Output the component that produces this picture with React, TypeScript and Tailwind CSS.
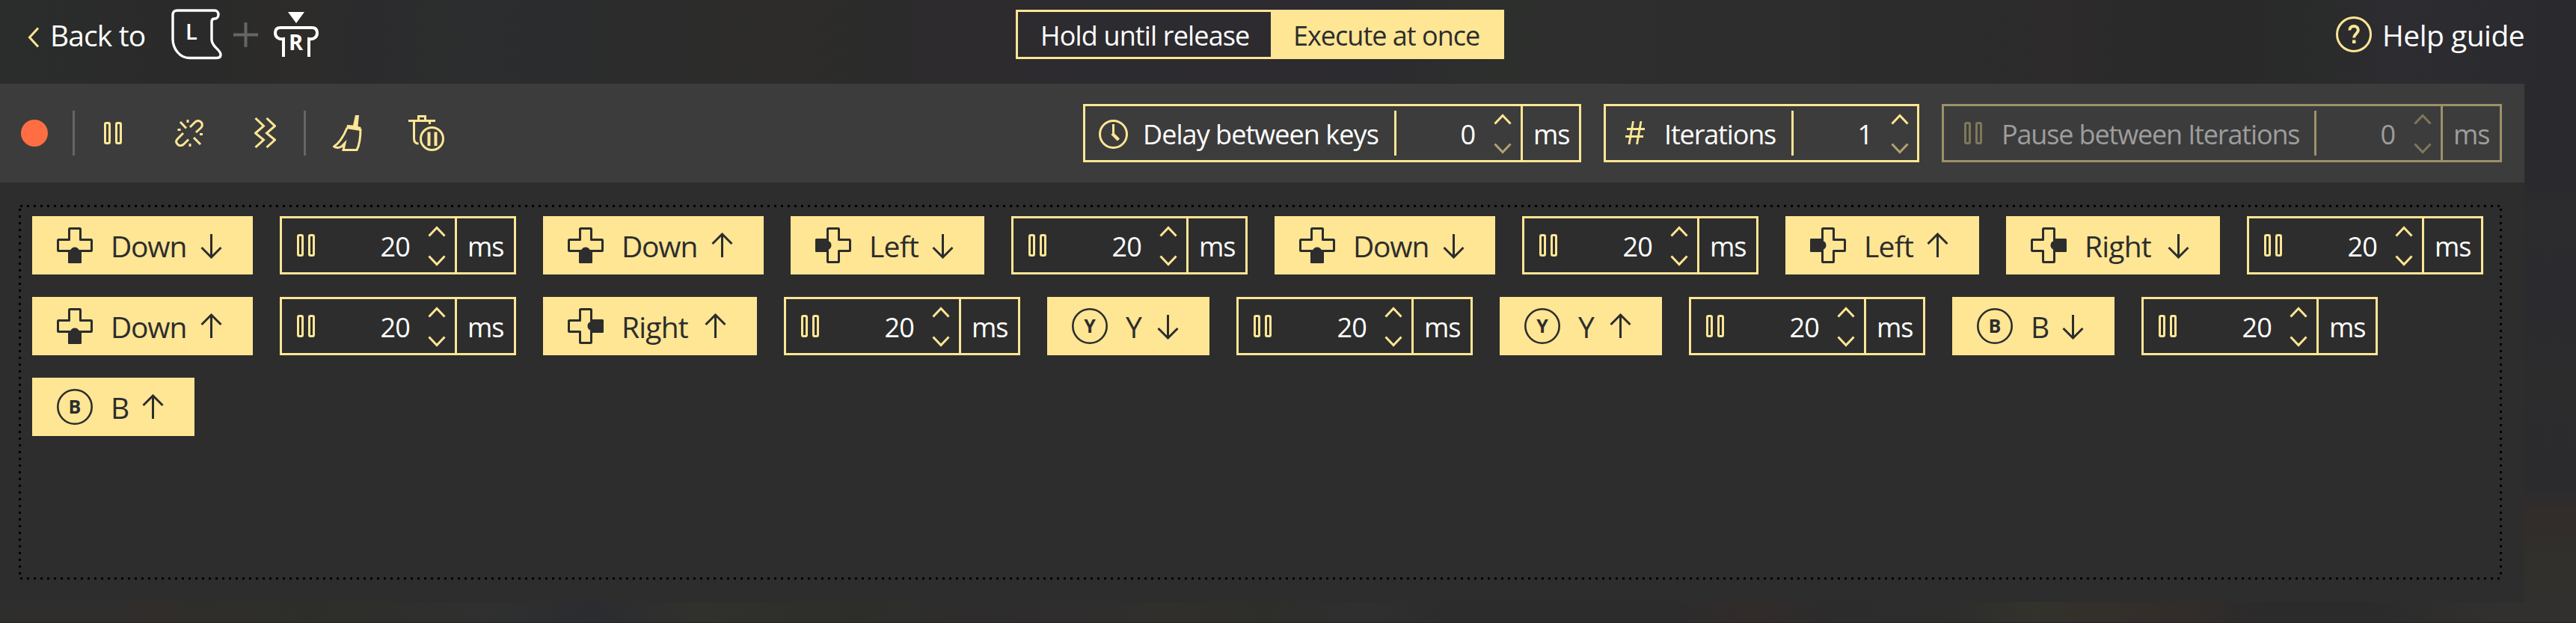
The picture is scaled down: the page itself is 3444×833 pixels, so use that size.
import { ReactNode } from 'react'

type Direction = 'up' | 'down'
type PadKey = 'Down' | 'Left' | 'Right' | 'Y' | 'B'

type Step =
  | { kind: 'key'; name: PadKey; direction: Direction }
  | { kind: 'wait'; ms: number }

const key = (name: PadKey, direction: Direction): Step => ({ kind: 'key', name, direction })
const wait = (ms: number): Step => ({ kind: 'wait', ms })

const steps: Step[] = [
  key('Down', 'down'),
  wait(20),
  key('Down', 'up'),
  key('Left', 'down'),
  wait(20),
  key('Down', 'down'),
  wait(20),
  key('Left', 'up'),
  key('Right', 'down'),
  wait(20),
  key('Down', 'up'),
  wait(20),
  key('Right', 'up'),
  wait(20),
  key('Y', 'down'),
  wait(20),
  key('Y', 'up'),
  wait(20),
  key('B', 'down'),
  wait(20),
  key('B', 'up'),
]

const keyWidths: Record<PadKey, string> = {
  Down: 'w-[295px]',
  Left: 'w-[259px]',
  Right: 'w-[286px]',
  Y: 'w-[217px]',
  B: 'w-[217px]',
}

const keyTracking: Record<PadKey, string> = {
  Down: 'tracking-[-1.2px]',
  Left: 'tracking-[-0.8px]',
  Right: 'tracking-[-0.8px]',
  Y: '',
  B: '',
}

export default function App() {
  return (
    <div className="h-[833px] w-[3444px] overflow-hidden bg-[#2c2c2d] font-['Open_Sans','Noto_Sans',sans-serif] text-white">
      <div className="flex h-full flex-col">
        <TopBar />
        <div className="flex shrink-0">
          <div className="w-[3375px] shrink-0">
            <Toolbar />
            <Timeline />
          </div>
          {/* Dimmed artwork showing beside the panel */}
          <div className="flex-1 bg-[linear-gradient(to_bottom,#2a292e_0%,#2a292e_18%,#2c2c2e_25%,#2b2a2f_40%,#2c2c2d_58%,#2b2b2e_78%,#322c2a_82%,#322c2a_86%,#302f2b_90%,#31302e_100%)]" />
        </div>
        <div className="h-7 border-b border-[#292329] bg-[linear-gradient(to_right,#2e2e2c_0%,#302d2b_6%,#2d2e29_12%,#2f302e_18%,#2b2c30_23%,#30302c_27%,#2d2e2a_33%,#2e2c2d_40%,#312f2c_45%,#2d2d29_49%,#2f2f30_53%,#2c2c2c_56%,#2c2c2c_65%,#322b2a_68%,#2c2c2c_71%,#2d2d2c_76%,#33322b_79%,#332d2a_84%,#2b2b2b_88%,#2b2b2b_92%,#31302e_97%,#32302e_100%)]" />
      </div>
    </div>
  )
}

function TopBar() {
  return (
    <header className="flex h-[112px] shrink-0 bg-[linear-gradient(to_right,#2b2d2c_0%,#2a2a2a_7%,#2d2c2a_12%,#2b2b2e_14%,#2c2d2d_17%,#2b2c2e_21%,#2c2c2c_25%,#2d2c2a_31%,#2b2b2b_34%,#2e2b2e_37%,#2c2b2f_43%,#2d2b30_50%,#2c2b2f_54%,#2d2f2d_58%,#2d2d2d_65%,#2c2c2c_75%,#2d2b2b_80%,#292929_86%,#2a2b2b_90%,#2d2c31_93%,#2a292e_100%)]">
      <div className="flex w-[1358px] items-start">
        <svg className="mt-9 ml-[37px] h-7 w-4" viewBox="0 0 16 28" fill="none" stroke="#ffe694" strokeWidth="3">
          <path d="M14 1.5 2.5 14 14 26.5" />
        </svg>
        <span className="mt-5 ml-[14px] w-[129px] text-[39px] leading-[54px] tracking-[-0.9px] whitespace-nowrap">Back to</span>
        <LeftTrigger />
        <svg className="mt-[30px] ml-[15px] h-[33px] w-[33px]" viewBox="0 0 33 33" stroke="#666" strokeWidth="4">
          <path d="M16.5 0v33M0 16.5h33" />
        </svg>
        <RightStick />
      </div>

      <div className="mt-[13px] flex h-[66px] w-[653px] border-[3px] border-[#ffe694] text-[36px] whitespace-nowrap">
        <div className="w-[338px] pl-[30px] leading-[64px] tracking-[-0.85px]">Hold until release</div>
        <div className="h-[60px] flex-1 bg-[#ffe694] pl-[30px] leading-[64px] tracking-[-1px] text-[#2d2d2d]">Execute at once</div>
      </div>

      <div className="ml-[1112px] flex items-start">
        <svg className="mt-[22px] h-12 w-12" viewBox="0 0 48 48" fill="none" stroke="#ffe694">
          <circle cx="24" cy="24" r="22.5" strokeWidth="3" />
          <path d="M18.3 18.4c0-3.3 2.3-5.4 5.7-5.4s5.8 2.1 5.8 5.3c0 4.8-5.6 4.9-5.6 10.2" strokeWidth="4" />
          <path d="M24.2 31.5v4.5" strokeWidth="4.5" />
        </svg>
        <span className="mt-5 ml-[14px] text-[39px] leading-[54px] tracking-[-0.5px] whitespace-nowrap">Help guide</span>
      </div>
    </header>
  )
}

function LeftTrigger() {
  return (
    <svg className="mt-3 ml-[33px] h-[68px] w-[68px] shrink-0" viewBox="0 0 68 68" fill="none" stroke="#fff" strokeWidth="3.4">
      <path d="M8 2h50c3 0 5 2.500 5 5.500s-2 5.500-5 5.500c-2.500 0-4 1-4 4v24c0 10 12 13 12 20 0 3-2 4.500-5 4.500H24C12 65.500 2 54 2 40V8c0-4 2-6 6-6Z" />
      <text x="19" y="41" fill="#fff" stroke="none" fontSize="29" fontWeight="600">
        L
      </text>
    </svg>
  )
}

function RightStick() {
  return (
    <svg className="mt-4 ml-[21px] h-[60px] w-[60px] shrink-0" viewBox="0 0 60 60" fill="none" stroke="#fff" strokeWidth="4">
      <path d="M19 0h22L30 15Z" fill="#fff" stroke="none" />
      <path d="M13 60V36c-6 1-11-2-11-8 0-5 3-7 7-7h42c4 0 7 2 7 7 0 6-5 9-11 8v24" />
      <text x="20" y="51" fill="#fff" stroke="none" fontSize="29" fontWeight="700">
        R
      </text>
    </svg>
  )
}

function Toolbar() {
  return (
    <div className="flex h-[132px] bg-[#3c3c3c]">
      <div className="flex w-[1448px] items-start">
        <div className="mt-12 ml-7 size-9 rounded-full bg-[#ff6e42]" />
        <div className="mt-9 ml-[33px] h-[60px] w-[3px] bg-[#666]" />
        <PauseIcon className="mt-[51px] ml-[39px]" />
        <BrokenLinkIcon />
        <ZigzagIcon />
        <div className="mt-9 ml-[37px] h-[60px] w-[3px] bg-[#666]" />
        <BroomIcon />
        <ClearPausesIcon />
      </div>

      <div className="mt-[27px] flex gap-[30px]">
        <SettingBox
          icon={<ClockIcon />}
          label="Delay between keys"
          value={0}
          unit="ms"
          boxClass="w-[666px] pl-[18px]"
          labelClass="ml-5 w-[336px] tracking-[-0.95px]"
        />
        <SettingBox
          icon={<HashIcon />}
          label="Iterations"
          value={1}
          boxClass="w-[422px] pl-[26px]"
          labelClass="ml-[26px] w-[170px] tracking-[-1.15px]"
        />
        <SettingBox
          icon={<PauseIcon className="mt-[21px]" />}
          label="Pause between Iterations"
          value={0}
          unit="ms"
          disabled
          boxClass="w-[749px] pl-[27px]"
          labelClass="ml-[26px] w-[418px] tracking-[-1.15px]"
        />
      </div>
    </div>
  )
}

interface SettingBoxProps {
  icon: ReactNode
  label: string
  value: number
  unit?: string
  disabled?: boolean
  boxClass: string
  labelClass: string
}

function SettingBox({ icon, label, value, unit, disabled = false, boxClass, labelClass }: SettingBoxProps) {
  const border = disabled ? 'border-[#9d9168]' : 'border-[#ffe694]'
  const rule = disabled ? 'bg-[#9d9168]' : 'bg-[#ffe694]'
  const text = disabled ? 'text-[#9d9d9d]' : 'text-white'

  return (
    <div className={`flex h-[78px] items-start border-[3px] text-[36px] leading-[76px] whitespace-nowrap ${border} ${text} ${boxClass}`}>
      <div className={disabled ? 'opacity-35' : ''}>{icon}</div>
      <span className={labelClass}>{label}</span>
      <div className={`mt-[6px] h-[60px] w-[3px] ${rule}`} />
      <span className="w-[106px] text-right">{value}</span>
      <Spinner upDim={disabled} downDim={disabled ? 'opacity-35' : 'opacity-60'} />
      {unit && <span className={`ml-3 h-[72px] flex-1 border-l-[3px] pl-[14px] tracking-[-1px] ${border}`}>{unit}</span>}
    </div>
  )
}

function Spinner({ upDim = false, downDim = '' }: { upDim?: boolean; downDim?: string }) {
  return (
    <svg className="mt-[10px] ml-6 h-[54px] w-6 shrink-0" viewBox="0 0 24 54" fill="none" stroke="#ffe694" strokeWidth="3">
      <path className={upDim ? 'opacity-35' : ''} d="M1.500 13.500 12 2.500l10.500 11" />
      <path className={downDim} d="M1.500 40.500 12 51.500l10.500-11" />
    </svg>
  )
}

function Timeline() {
  return (
    <div className="flex h-[561px] flex-col bg-[#2d2d2d] pt-[30px] pr-[30px] pb-[30px] pl-[25px]">
      <div className="ml-[2px] h-[3px] bg-[repeating-linear-gradient(to_right,#000_0_3px,transparent_3px_9px)]" />
      <div className="flex flex-1">
        <div className="w-[3px] bg-[repeating-linear-gradient(to_bottom,transparent_0_2px,#000_2px_5px,transparent_5px_9px)]" />
        <div className="flex flex-1 flex-wrap content-start gap-x-9 gap-y-[30px] pt-3 pl-[15px]">
          {steps.map((step, idx) =>
            step.kind === 'key' ? (
              <KeyStep key={idx} name={step.name} direction={step.direction} />
            ) : (
              <WaitStep key={idx} ms={step.ms} />
            )
          )}
        </div>
        <div className="w-[3px] bg-[repeating-linear-gradient(to_bottom,transparent_0_2px,#000_2px_5px,transparent_5px_9px)]" />
      </div>
      <div className="ml-[2px] h-[3px] bg-[repeating-linear-gradient(to_right,#000_0_3px,transparent_3px_9px)]" />
    </div>
  )
}

function KeyStep({ name, direction }: { name: PadKey; direction: Direction }) {
  return (
    <div className={`flex h-[78px] items-start bg-[#ffe694] pr-[41px] pl-[33px] text-[#2d2d2d] ${keyWidths[name]}`}>
      <div className="mt-[15px] size-12 shrink-0">{name === 'Y' || name === 'B' ? <FaceButton letter={name} /> : <DPad name={name} />}</div>
      <span className={`ml-6 text-[39px] leading-[80px] whitespace-nowrap ${keyTracking[name]}`}>{name}</span>
      <svg
        className={`ml-auto h-[33px] w-[29px] shrink-0 ${direction === 'up' ? 'mt-[22px]' : 'mt-6'}`}
        viewBox="0 0 29 33"
        fill="none"
        stroke="currentColor"
        strokeWidth="3"
      >
        <path d={direction === 'up' ? 'M14.500 33V2M1.500 15 14.500 2l13 13' : 'M14.500 0v31M1.500 18l13 13 13-13'} />
      </svg>
    </div>
  )
}

function WaitStep({ ms }: { ms: number }) {
  return (
    <div className="flex h-[78px] w-[316px] items-start border-[3px] border-[#ffe694] text-[36px] leading-[76px]">
      <PauseIcon className="mt-[21px] ml-5" />
      <span className="w-[127px] text-right tracking-[-0.8px]">{ms}</span>
      <Spinner />
      <span className="ml-3 h-[72px] flex-1 border-l-[3px] border-[#ffe694] pl-[14px] tracking-[-1px]">ms</span>
    </div>
  )
}

function DPad({ name }: { name: PadKey }) {
  const turn = name === 'Left' ? 'rotate-90' : name === 'Right' ? '-rotate-90' : ''
  return (
    <svg className={`size-12 ${turn}`} viewBox="0 0 48 48" fill="none" stroke="currentColor" strokeWidth="3" strokeLinejoin="round">
      <path d="M17.500 1.500h13q1 0 1 1v14h14q1 0 1 1v13q0 1-1 1h-14v14q0 1-1 1h-13q-1 0-1-1v-14h-14q-1 0-1-1v-13q0-1 1-1h14v-14q0-1 1-1Z" />
      <path d="M16.500 31.500 19 32c1-2.500 2-4 5-4s4 1.500 5 4l2.500-.5v15h-15Z" fill="currentColor" />
    </svg>
  )
}

function FaceButton({ letter }: { letter: string }) {
  return (
    <svg className="size-12" viewBox="0 0 48 48">
      <circle cx="24" cy="24" r="22.700" fill="none" stroke="currentColor" strokeWidth="2.600" />
      <text x="24" y="33" fill="currentColor" fontSize="25" fontWeight="700" textAnchor="middle">
        {letter}
      </text>
    </svg>
  )
}

function PauseIcon({ className = '' }: { className?: string }) {
  return (
    <svg className={`h-[30px] w-6 shrink-0 ${className}`} viewBox="0 0 24 30" fill="none" stroke="#ffe694" strokeWidth="3">
      <rect x="1.500" y="1.500" width="6" height="27" rx="1.500" />
      <rect x="16.500" y="1.500" width="6" height="27" rx="1.500" />
    </svg>
  )
}

function BrokenLinkIcon() {
  return (
    <svg className="mt-12 ml-[71px] h-9 w-[38px]" viewBox="0 0 38 36" fill="none" stroke="#ffe694" strokeWidth="3">
      <path d="m20 10 6-6c3-3 6-3 8.500-1s2.500 5.500 0 8L28 17" />
      <path d="m11 18-7.500 7.500c-2.500 2.500-2.500 5 0 7.500s5.500 2 8 0l6.500-6.500" />
      <path d="m7 3 8 8.500M25 24l9 9M17 0v4M20 32v4M3.500 13.500h4M33 19.500h4" />
    </svg>
  )
}

function ZigzagIcon() {
  return (
    <svg className="mt-[45px] ml-[68px] h-[41px] w-[29px]" viewBox="0 0 29 41" fill="none" stroke="#ffe694" strokeWidth="3">
      <path d="m1.500 1 11 10.500-11 9.500 11 9-11 10M16.500 1l11 10.500-11 9.500 11 9-11 10" />
    </svg>
  )
}

function BroomIcon() {
  return (
    <svg className="mt-[42px] ml-9 h-12 w-[39px]" viewBox="0 0 39 48" fill="none" stroke="#ffe694" strokeWidth="3">
      <path d="M30 0h5l-1.500 15 4 1-.5 5-19-3 1-5 8 .5Z" fill="#ffe694" stroke="none" />
      <path d="M19 17C14.500 28 9 37 1.500 42c5 3 10 1 13-3l1.500-1.500-2 9h18C36.500 38 37 27 37 18" />
    </svg>
  )
}

function ClearPausesIcon() {
  return (
    <svg className="mt-[42px] ml-[62px] h-12 w-12" viewBox="0 0 48 48" fill="none" stroke="#ffe694" strokeWidth="3">
      <path d="M0 7.500h36M13.500 7V1.500h9V7M7.500 7v24c0 5 2 7 6 7M28.500 8v4" />
      <circle cx="31.500" cy="31.500" r="15" />
      <path d="M27.500 22.500V41M36.500 22.500V41" strokeWidth="4" />
    </svg>
  )
}

function ClockIcon() {
  return (
    <svg className="mt-[18px] h-[39px] w-[39px]" viewBox="0 0 39 39" fill="none" stroke="#ffe694" strokeWidth="3">
      <circle cx="19.500" cy="19.500" r="18" />
      <path d="M19.500 6v13" />
      <path d="m18 18.500 8.500 8.500" strokeWidth="4.500" />
    </svg>
  )
}

function HashIcon() {
  return (
    <svg className="mt-5 h-[31px] w-[26px]" viewBox="0 0 26 31" fill="none" stroke="#ffe694" strokeWidth="2.800">
      <path d="M10.500 0 5 31M21 0l-5.500 31M2 10.500h24M0 20.500h24" />
    </svg>
  )
}
